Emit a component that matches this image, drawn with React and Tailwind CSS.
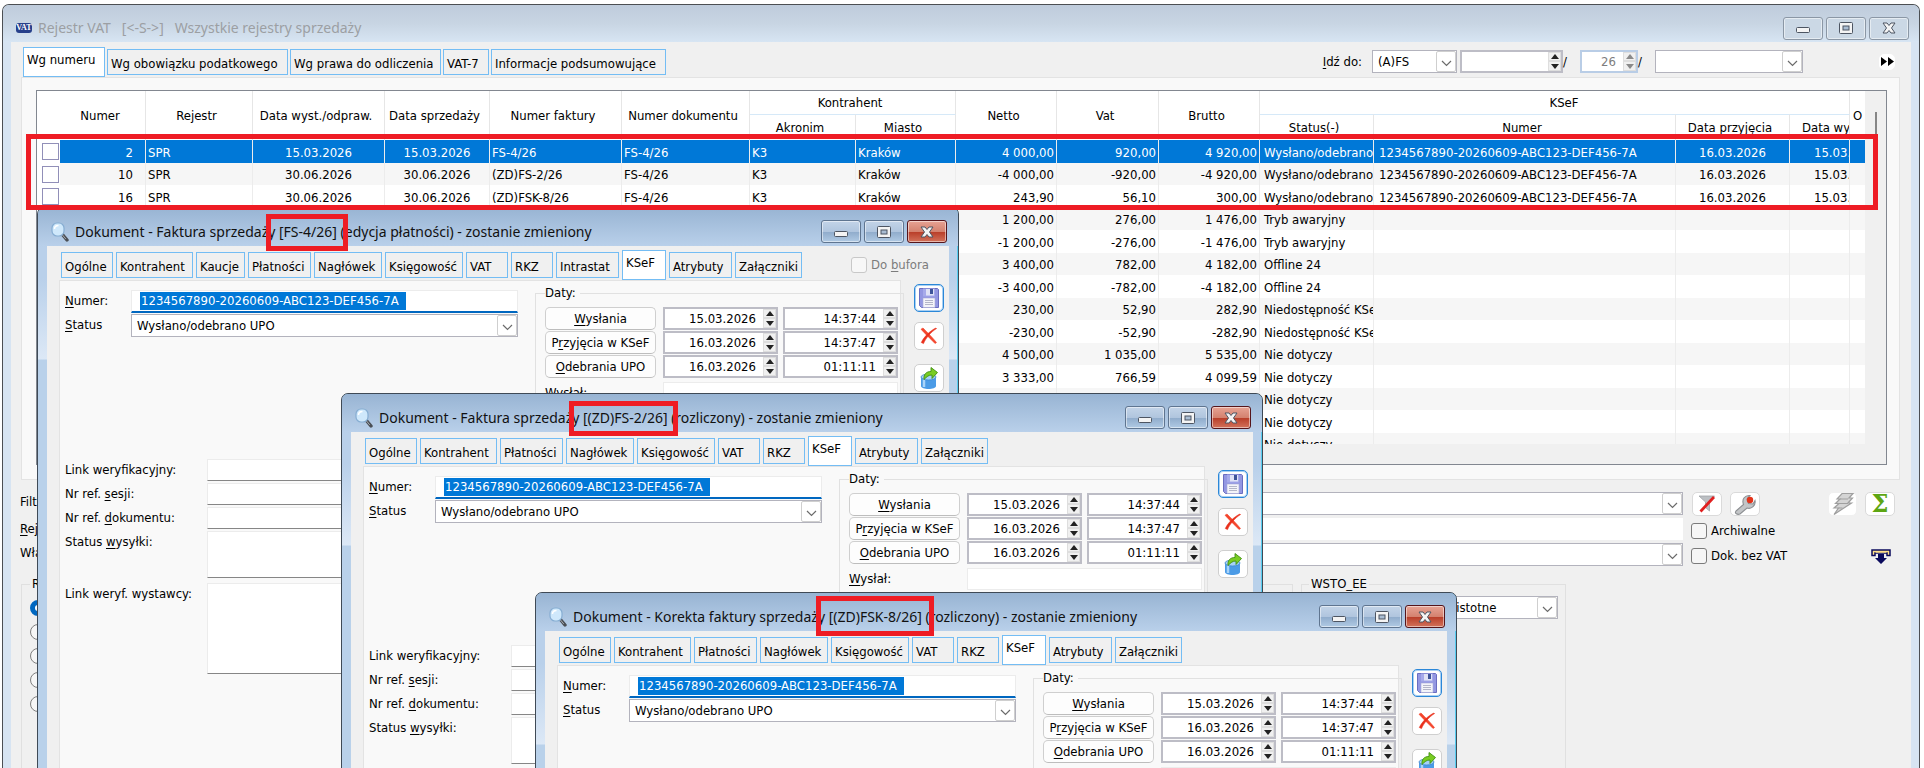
import React, { useId } from "react";
import clsx from "clsx";

const REGISTER_TABS = [
	{ label: "Wg numeru", width: "w-[82px]", active: true },
	{ label: "Wg obowiązku podatkowego", width: "w-[181px]" },
	{ label: "Wg prawa do odliczenia", width: "w-[151px]" },
	{ label: "VAT-7", width: "w-[46px]" },
	{ label: "Informacje podsumowujące", width: "w-[175px]" },
];

const KSEF_NUMBER = "1234567890-20260609-ABC123-DEF456-7A";

const ROWS = [
	["2", "15.03.2026", "FS-4/26", "4 000,00", "920,00", "4 920,00", "Wysłano/odebrano UPO", true],
	["10", "30.06.2026", "(ZD)FS-2/26", "-4 000,00", "-920,00", "-4 920,00", "Wysłano/odebrano UPO", true],
	["16", "30.06.2026", "(ZD)FSK-8/26", "243,90", "56,10", "300,00", "Wysłano/odebrano UPO", true],
	["", "", "", "1 200,00", "276,00", "1 476,00", "Tryb awaryjny"],
	["", "", "", "-1 200,00", "-276,00", "-1 476,00", "Tryb awaryjny"],
	["", "", "", "3 400,00", "782,00", "4 182,00", "Offline 24"],
	["", "", "", "-3 400,00", "-782,00", "-4 182,00", "Offline 24"],
	["", "", "", "230,00", "52,90", "282,90", "Niedostępność KSeF"],
	["", "", "", "-230,00", "-52,90", "-282,90", "Niedostępność KSeF"],
	["", "", "", "4 500,00", "1 035,00", "5 535,00", "Nie dotyczy"],
	["", "", "", "3 333,00", "766,59", "4 099,59", "Nie dotyczy"],
	["", "", "", "", "", "", "Nie dotyczy"],
	["", "", "", "", "", "", "Nie dotyczy"],
	["", "", "", "", "", "", "Nie dotyczy"],
];

const TAB_WIDTHS = {
	Ogólne: "w-[52px]",
	Kontrahent: "w-[77px]",
	Kaucje: "w-[49px]",
	Płatności: "w-[63px]",
	Nagłówek: "w-[68px]",
	Księgowość: "w-[78px]",
	VAT: "w-[42px]",
	RKZ: "w-[42px]",
	Intrastat: "w-[63px]",
	KSeF: "w-[44px]",
	Atrybuty: "w-[63px]",
	Załączniki: "w-[67px]",
};

const SHORT_TABS = ["Ogólne", "Kontrahent", "Płatności", "Nagłówek", "Księgowość", "VAT", "RKZ", "KSeF", "Atrybuty", "Załączniki"];
const LONG_TABS = ["Ogólne", "Kontrahent", "Kaucje", "Płatności", "Nagłówek", "Księgowość", "VAT", "RKZ", "Intrastat", "KSeF", "Atrybuty", "Załączniki"];

/* ---------- icons ---------- */

function MagnifierIcon() {
	return (
		<svg width="18" height="20" viewBox="0 0 18 20" className="shrink-0" aria-hidden>
			<path d="M11 12l5 6" stroke="#4b4f55" strokeWidth="3.4" strokeLinecap="round" />
			<path d="M11.500 13l3 3.600" stroke="#a8adb3" strokeWidth="1" strokeLinecap="round" />
			<rect x="1" y="1" width="12" height="13" rx="5" fill="#cfe8fb" stroke="#86add2" strokeWidth="1.200" />
			<path d="M3.500 7c0-2.500 1.500-3.500 4-3.500" stroke="#fff" strokeWidth="1.500" fill="none" />
		</svg>
	);
}

function SaveIcon() {
	return (
		<svg width="22" height="22" viewBox="0 0 22 22" aria-hidden>
			<path d="M1.500 1.500h18l1 1v18h-17l-2-2z" fill="#9397e2" stroke="#6a6dc0" />
			<rect x="5" y="1.500" width="12" height="8" fill="#a6aaea" />
			<rect x="8" y="2" width="8" height="6.500" fill="#dfe2f6" />
			<rect x="12" y="2" width="3" height="5" fill="#3d5499" />
			<rect x="5" y="11" width="12" height="9.500" fill="#f4f4f9" stroke="#a9acd6" strokeWidth="0.600" />
			<path d="M7 13.500h8M7 15.500h8M7 17.500h8" stroke="#b4b6c8" />
		</svg>
	);
}

function CancelIcon() {
	return (
		<svg width="20" height="20" viewBox="0 0 20 20" aria-hidden>
			<path d="M2 3.200L4 2c4 4 9 9 13.500 14.500L16 17.500C11 12 6 8 2 3.200z" fill="#f4452c" stroke="#f4452c" strokeWidth="0.600" />
			<path d="M17.500 2.600c-5 3-10.500 9-13 15L2.300 16.500C5.500 10 11.500 4.500 17 2z" fill="#e92f1b" stroke="#e92f1b" strokeWidth="0.600" />
		</svg>
	);
}

function DatabaseIcon() {
	return (
		<svg width="20" height="26" viewBox="0 0 20 26" aria-hidden>
			<path d="M2 12v9c0 4 15 4 15 0v-9z" fill="#4b9be6" />
			<path d="M5 14v8" stroke="#a9d4fa" strokeWidth="2.500" />
			<ellipse cx="9.500" cy="12" rx="7.500" ry="3" fill="#a5d2f7" stroke="#3f86cf" strokeWidth="0.800" />
			<path d="M5 14.500c-.5-5 2-8 7-8V2.500l6.500 5-5.500 6V10c-3.500 0-5 1.500-8 4.500z" fill="#79cc22" stroke="#3f8f12" strokeWidth="0.900" />
		</svg>
	);
}

function Chevron() {
	return (
		<svg width="11" height="7" viewBox="0 0 11 7" aria-hidden>
			<path d="M1 1l4.500 4.500L10 1" stroke="#6b6b6b" strokeWidth="1.200" fill="none" />
		</svg>
	);
}

function FilterOffIcon() {
	return (
		<svg width="20" height="20" viewBox="0 0 20 20" aria-hidden>
			<path d="M2 2h15.500L12.500 8v9l-4-3.500V8z" fill="#bcbfc3" stroke="#9ea2a6" strokeWidth="0.800" />
			<path d="M3.500 17.500L17 3" stroke="#e01f1f" strokeWidth="2.800" />
		</svg>
	);
}

function WrenchIcon() {
	return (
		<svg width="24" height="22" viewBox="0 0 24 22" aria-hidden>
			<path d="M3 18l7.500-6.500C8.500 6 12 2 17 2.500L14 6l1.500 4.500L20 11l2-3.500c1 5-3.500 9-8 7.500L7 21c-2.500 1-6-.5-4-3z" fill="#c3c5c7" stroke="#8b8e91" strokeWidth="1.100" />
			<circle cx="17" cy="7" r="3.200" fill="#e3341b" />
		</svg>
	);
}

function LightningIcon() {
	return (
		<svg width="24" height="24" viewBox="0 0 24 24" aria-hidden>
			<path d="M11 1.500h11l-4 4.500h3.500l-4.500 5h3.500L3 22.500 7.500 16H3l5-4.500H4.500L9 7H6z" fill="#d4d4d4" stroke="#9f9f9f" strokeWidth="1.200" />
			<path d="M9 7h8M8 11.500h9M7.500 16h4" stroke="#9f9f9f" strokeWidth="1.200" />
		</svg>
	);
}

function DropDownIcon() {
	return (
		<svg width="20" height="15" viewBox="0 0 20 15" aria-hidden>
			<path d="M1 1h18v5.500h-3V4H4v2.500H1z" fill="#ffe08a" stroke="#0a0a5c" strokeWidth="1.500" />
			<path d="M4.500 3h11" stroke="#ffe08a" strokeWidth="1.500" />
			<path d="M7 5h6v4h3l-6 6-6-6h3z" fill="#0a0a5c" />
		</svg>
	);
}

/* ---------- controls ---------- */

// Label with one underlined access key: "_Numer:" underlines the N
function Mnemonic({ text }) {
	const at = text.indexOf("_");
	if (at < 0) return text;
	return (
		<>
			{text.slice(0, at)}
			<span className="underline underline-offset-2">{text[at + 1]}</span>
			{text.slice(at + 2)}
		</>
	);
}

function WindowButtons({ inactive }) {
	const base = "flex h-[23px] w-10 items-center justify-center rounded-[3px] border shadow-[inset_0_0_0_1px_rgba(255,255,255,0.5)]";
	const plain = inactive
		? "border-[#8b97a5] bg-[#cbd8e5]"
		: "border-[#5f7590] bg-[linear-gradient(#c3d4e8_0%,#b0c5de_50%,#8fabcb_51%,#b0cae4_100%)]";
	const close = inactive
		? "border-[#8b97a5] bg-[#cbd8e5]"
		: "border-[#55151b] bg-[linear-gradient(#e7a394_0%,#d4826f_50%,#b83c27_51%,#d2725b_100%)]";
	return (
		<div className="ml-auto flex gap-[3px]">
			<button type="button" aria-label="Minimalizuj" className={clsx(base, plain)}>
				<svg width="14" height="14" viewBox="0 0 14 14" aria-hidden>
					<rect x="0.500" y="6.500" width="13" height="5" rx="1" fill="#f4f4f4" stroke="#4d5562" />
				</svg>
			</button>
			<button type="button" aria-label="Maksymalizuj" className={clsx(base, plain)}>
				<svg width="14" height="12" viewBox="0 0 14 12" aria-hidden>
					<rect x="0.500" y="0.500" width="13" height="11" rx="1" fill="#f4f4f4" stroke="#4d5562" />
					<rect x="4" y="4" width="6" height="4" fill="#a9bdd3" stroke="#4d5562" />
				</svg>
			</button>
			<button type="button" aria-label="Zamknij" className={clsx(base, close)}>
				<svg width="14" height="12" viewBox="0 0 14 12" aria-hidden>
					<path d="M1 1h4l2 2.500L9 1h4L9.500 6l3.500 5H9L7 8.500 5 11H1l3.500-5z" fill="#f4f4f4" stroke="#4d5562" />
				</svg>
			</button>
		</div>
	);
}

function Combo({ id, label, value, className }) {
	return (
		<div className={clsx("flex h-[23px] border border-[#b3b3bd] bg-white", className)}>
			<select
				id={id}
				aria-label={label}
				defaultValue={value}
				className="min-w-0 flex-1 appearance-none bg-transparent pl-[5px] outline-none"
			>
				<option>{value}</option>
			</select>
			<span className="pointer-events-none flex w-5 items-center justify-center rounded-[2px] border border-[#cfcfcf] bg-white pt-1">
				<Chevron />
			</span>
		</div>
	);
}

function Spinner({ label, value, width, disabled }) {
	const step = "flex items-center justify-center border border-[#dedede]";
	return (
		<div
			className={clsx(
				"flex h-[23px] border-2 bg-white",
				disabled ? "border-[#b9cde6] text-[#7d7d7d]" : "border-[#bdbdc6] text-black",
				width
			)}
		>
			<input
				type="text"
				aria-label={label}
				defaultValue={value}
				disabled={disabled}
				className="min-w-0 flex-1 bg-transparent pt-px pr-[7px] text-right outline-none"
			/>
			<span className="flex w-[13px] flex-col bg-[#f0f0f0]">
				<button type="button" aria-label={`${label} +`} disabled={disabled} className={clsx(step, "h-[9px]")}>
					<svg width="8" height="5" viewBox="0 0 8 5" aria-hidden><path d="M4 0l4 5H0z" fill={disabled ? "#8a8a8a" : "#222"} /></svg>
				</button>
				<button type="button" aria-label={`${label} -`} disabled={disabled} className={clsx(step, "h-[10px]")}>
					<svg width="8" height="5" viewBox="0 0 8 5" aria-hidden><path d="M0 0h8L4 5z" fill={disabled ? "#8a8a8a" : "#222"} /></svg>
				</button>
			</span>
		</div>
	);
}

function ToolButton({ label, children, className }) {
	return (
		<button
			type="button"
			aria-label={label}
			className={clsx("flex items-center justify-center rounded-[5px] border bg-white", className)}
		>
			{children}
		</button>
	);
}

function Tab({ label, width, active }) {
	return (
		<button
			type="button"
			role="tab"
			aria-selected={!!active}
			className={clsx(
				"flex shrink-0 border border-[#74bdf4] pl-[3px] whitespace-nowrap",
				active ? "h-[30px] bg-white pt-1" : "mb-[2px] h-[26px] bg-[#f0f0f0] pt-[6px]",
				width
			)}
		>
			{label}
		</button>
	);
}

function Highlight({ className }) {
	return <div className={clsx("pointer-events-none absolute border-[5px] border-[#ee1c24]", className)} />;
}

/* ---------- document window ---------- */

function DateRow({ label, date, time }) {
	return (
		<div className="flex h-[23px] items-center">
			<button type="button" className="mr-[7px] h-[23px] w-[111px] rounded-[5px] border border-[#cfcfcf] border-b-[#bdbdbd] bg-[#fdfdfd] whitespace-nowrap">
				<Mnemonic text={label} />
			</button>
			<Spinner label={`${label} data`} value={date} width="mr-[5px] w-[115px]" />
			<Spinner label={`${label} godzina`} value={time} width="w-[115px]" />
		</div>
	);
}

function LongField({ label, multiline }) {
	const id = useId();
	const field = "min-w-0 flex-1 resize-none border border-[#ececec] border-b-[#868686] bg-white outline-none";
	return (
		<div className="flex">
			<label htmlFor={id} className="w-[142px] shrink-0 pt-[3px] whitespace-nowrap">
				<Mnemonic text={label} />
			</label>
			{multiline ? <textarea id={id} className={clsx(field, multiline)} /> : <input id={id} type="text" className={clsx(field, "h-[22px]")} />}
		</div>
	);
}

function DocumentWindow({ title, tabs, buffer, position, mark }) {
	const id = useId();
	return (
		<section
			className={clsx(
				"absolute flex h-[800px] w-[922px] flex-col rounded-t-[7px] border border-[#3f4a56] px-[9px] shadow-[inset_-1px_0_0_0_#57cdf0]",
				"bg-[linear-gradient(#98b4d3_0px,#b9d0ea_39px,#b9d0ea_70px,#dce8f6_151px,#b9d1ea_152px)]",
				position
			)}
		>
			<header className="-mx-[9px] flex h-[38px] items-center rounded-t-[6px] bg-[linear-gradient(#98b4d3,#b9d0ea)] pt-[9px] pr-[11px] pl-[13px] font-['Noto_Sans',sans-serif] text-sm text-[#111]">
				<MagnifierIcon />
				<h2 className="ml-[6px] whitespace-nowrap">{title}</h2>
				<WindowButtons />
			</header>
			<Highlight className={mark} />
			<div className="flex flex-1 flex-col bg-[#f0f0f0]">
				<div className="flex h-[34px] items-end gap-[3px] pl-[14px]" role="tablist">
					{tabs.map((tab) => (
						<Tab key={tab} label={tab} width={TAB_WIDTHS[tab]} active={tab === "KSeF"} />
					))}
					{buffer && (
						<label className="mr-5 mb-[7px] ml-auto flex items-center gap-1 text-[#7c7c7c]">
							<input type="checkbox" disabled className="size-4 appearance-none rounded-[3px] border border-[#c8c8c8] bg-[#f7f7f7]" />
							<span><Mnemonic text="Do _bufora" /></span>
						</label>
					)}
				</div>
				<div className="flex flex-1 pl-3">
					<div className="flex min-w-0 flex-1 border border-[#e3e3e3] bg-[#f9f9f9] pl-[5px]">
						<div className="min-w-0 flex-1 pt-[9px]">
							<div className="flex h-[23px]">
								<label htmlFor={`${id}n`} className="w-[66px] pt-[3px]"><Mnemonic text="_Numer:" /></label>
								<div className="flex flex-1 border border-b-2 border-[#ececec] border-b-[#0067c0] bg-white py-px pl-2">
									<input
										id={`${id}n`}
										type="text"
										defaultValue={KSEF_NUMBER}
										className="w-[266px] bg-[#0078d7] pl-px text-white outline-none"
									/>
								</div>
							</div>
							<div className="mt-px flex h-[23px]">
								<label htmlFor={`${id}s`} className="w-[66px] pt-[3px]"><Mnemonic text="_Status" /></label>
								<Combo id={`${id}s`} value="Wysłano/odebrano UPO" className="flex-1" />
							</div>
							<div className="mt-[122px] flex flex-col gap-[2px]">
								<LongField label="Link weryfikacyjny:" />
								<LongField label="Nr ref. _sesji:" />
								<LongField label="Nr ref. _dokumentu:" />
								<LongField label="Status _wysyłki:" multiline="mb-[3px] h-[47px]" />
								<LongField label="Link weryf. wystawcy:" multiline="h-[91px]" />
							</div>
						</div>
						<fieldset className="mt-1 -mr-1 ml-[17px] w-[369px] border border-[#e1e1e1] pt-[6px] pl-[9px]">
							<legend className="h-4 pr-1 leading-4">Daty:</legend>
							<div className="flex flex-col gap-px">
								<DateRow label="_Wysłania" date="15.03.2026" time="14:37:44" />
								<DateRow label="P_rzyjęcia w KSeF" date="16.03.2026" time="14:37:47" />
								<DateRow label="_Odebrania UPO" date="16.03.2026" time="01:11:11" />
							</div>
							<div className="mt-1 flex h-[22px] items-center">
								<label htmlFor={`${id}w`} className="w-[118px]"><Mnemonic text="_Wysłał:" /></label>
								<input id={`${id}w`} type="text" className="h-[22px] w-[235px] border border-[#ececec] bg-white" />
							</div>
						</fieldset>
					</div>
					<div className="mr-[5px] ml-[13px] flex w-[30px] flex-col pt-1">
						<ToolButton label="Zapisz" className="h-7 border-[#2b87d8] shadow-[inset_0_0_0_1px_#a9d0f2]"><SaveIcon /></ToolButton>
						<ToolButton label="Anuluj" className="mt-[10px] h-7 border-[#cfcfcf]"><CancelIcon /></ToolButton>
						<ToolButton label="Eksport" className="mt-[14px] h-7 border-[#cfcfcf]"><DatabaseIcon /></ToolButton>
					</div>
				</div>
			</div>
		</section>
	);
}

/* ---------- register grid ---------- */

function RegisterTable() {
	const th = "border-r border-[#e6e6e6] p-0 pt-px pr-[5px] font-normal whitespace-nowrap overflow-hidden";
	const td = "border-r border-[#ececec] p-0 pt-[2px] whitespace-nowrap overflow-hidden";
	const sub = "border-t border-t-[#d6e9f8]";
	return (
		<table className="w-full table-fixed border-separate border-spacing-0">
			<colgroup>
				<col className="w-[23px]" />
				<col className="w-[86px]" />
				<col className="w-[107px]" />
				<col className="w-[132px]" />
				<col className="w-[105px]" />
				<col className="w-[132px]" />
				<col className="w-[128px]" />
				<col className="w-[106px]" />
				<col className="w-[100px]" />
				<col className="w-[101px]" />
				<col className="w-[102px]" />
				<col className="w-[101px]" />
				<col className="w-[114px]" />
				<col />
				<col className="w-[114px]" />
				<col className="w-[60px]" />
				<col className="w-[15px]" />
			</colgroup>
			<thead>
				<tr className="h-[23px]">
					<th rowSpan={2} className="p-0" aria-label="Zaznacz" />
					<th rowSpan={2} className={th}>Numer</th>
					<th rowSpan={2} className={th}>Rejestr</th>
					<th rowSpan={2} className={th}>Data wyst./odpraw.</th>
					<th rowSpan={2} className={th}>Data sprzedaży</th>
					<th rowSpan={2} className={th}>Numer faktury</th>
					<th rowSpan={2} className={th}>Numer dokumentu</th>
					<th colSpan={2} className={th}>Kontrahent</th>
					<th rowSpan={2} className={th}>Netto</th>
					<th rowSpan={2} className={th}>Vat</th>
					<th rowSpan={2} className={th}>Brutto</th>
					<th colSpan={4} className={clsx(th, "pl-6")}>KSeF</th>
					<th rowSpan={2} className="p-0 font-normal">O</th>
				</tr>
				<tr className="h-[26px]">
					<th className={clsx(th, sub)}>Akronim</th>
					<th className={clsx(th, sub)}>Miasto</th>
					<th className={clsx(th, sub)}>Status(-)</th>
					<th className={clsx(th, sub)}>Numer</th>
					<th className={clsx(th, sub)}>Data przyjęcia</th>
					<th className={clsx(th, sub, "pl-3 text-left")}>Data wysłania</th>
				</tr>
			</thead>
			<tbody>
				{ROWS.map(([no, date, invoice, net, vat, gross, status, sent], index) => (
					<tr
						key={index}
						className={clsx(
							"odd:h-[23px] even:h-[22px]",
							index === 0 ? "text-white" : "text-black",
							index === 0 ? "[&>td+td]:bg-[#0078d7]" : "even:[&>td+td]:bg-[#f6f6f6]"
						)}
					>
						<td className="p-0 pl-[5px]">
							<input
								type="checkbox"
								aria-label={`Zaznacz ${invoice}`}
								className="block size-[17px] appearance-none border border-[#918fb8] bg-white"
							/>
						</td>
						<td className={clsx(td, "pr-3 text-right")}>{no}</td>
						<td className={clsx(td, "pl-[2px]")}>{no && "SPR"}</td>
						<td className={clsx(td, "text-center")}>{date}</td>
						<td className={clsx(td, "text-center")}>{date}</td>
						<td className={clsx(td, "pl-[2px]")}>{invoice}</td>
						<td className={clsx(td, "pl-[2px]")}>{no && "FS-4/26"}</td>
						<td className={clsx(td, "pl-[2px]")}>{no && "K3"}</td>
						<td className={clsx(td, "pl-[2px]")}>{no && "Kraków"}</td>
						<td className={clsx(td, "pr-[2px] text-right")}>{net}</td>
						<td className={clsx(td, "pr-[2px] text-right")}>{vat}</td>
						<td className={clsx(td, "pr-[2px] text-right")}>{gross}</td>
						<td className={clsx(td, "pl-1")}>{status}</td>
						<td className={clsx(td, "pl-[5px]")}>{sent && KSEF_NUMBER}</td>
						<td className={clsx(td, "text-center")}>{sent && "16.03.2026"}</td>
						<td className={clsx(td, "pl-6")}>{sent && "15.03.2026"}</td>
						<td className="p-0" />
					</tr>
				))}
			</tbody>
		</table>
	);
}

export default function App() {
	return (
		<main className="relative flex h-screen flex-col overflow-hidden bg-white pt-1 pr-1 pl-[2px] font-['DejaVu_Sans_Condensed','DejaVu_Sans',sans-serif] text-[13px] leading-4 text-black">
			<section className="flex flex-1 flex-col rounded-t-[7px] border border-b-0 border-[#4c4f53] bg-[#d7e4f2] px-2">
				<header className="-mx-2 flex h-[37px] shrink-0 items-center rounded-t-[6px] bg-[linear-gradient(#bfccdc,#c8d5e3_50%,#d7e5f3)] pt-[9px] pr-[10px] pl-[13px] font-['Noto_Sans',sans-serif] text-sm text-[#9c9fa3]">
					<span className="flex h-[10px] w-4 items-center justify-center rounded-[3px] bg-[#27408b] font-['Liberation_Serif',serif] text-[8px] leading-none font-bold text-white">
						VAT
					</span>
					<h1 className="ml-[6px] whitespace-pre">{"Rejestr VAT   [<-S->]   Wszystkie rejestry sprzedaży"}</h1>
					<WindowButtons inactive />
				</header>

				<div className="flex flex-1 flex-col bg-[#f0f0f0]">
					<div className="flex h-[35px] items-end pl-3">
						<div className="flex items-end gap-[2px]" role="tablist">
							{REGISTER_TABS.map((tab) => (
								<Tab key={tab.label} {...tab} />
							))}
						</div>
						<div className="mr-4 mb-1 ml-auto flex h-[23px] items-center">
							<label htmlFor="goto" className="mr-[10px]"><Mnemonic text="_Idź do:" /></label>
							<Combo id="goto" value="(A)FS" className="mr-[3px] w-[85px]" />
							<Spinner label="Numer dokumentu" value="" width="w-[103px]" />
							<span className="w-[17px]">/</span>
							<Spinner label="Rok" value="26" width="w-[58px]" disabled />
							<span className="w-[17px]">/</span>
							<Combo label="Seria" value="" className="w-[148px]" />
							<ToolButton label="Dalej" className="ml-[76px] size-4 border-white">
								<svg width="13" height="9" viewBox="0 0 13 9" aria-hidden><path d="M0 0l6 4.500L0 9zM7 0l6 4.500L7 9z" fill="#000" /></svg>
							</ToolButton>
						</div>
					</div>

					<div className="mr-[11px] ml-[10px] border border-[#e3e3e3] bg-[#f9f9f9] pt-3 pr-3 pb-[14px] pl-[14px]">
						<div className="flex border border-[#828790] bg-[#f0f0f0]">
							<div className="min-w-0 flex-1 pb-5">
								<div className="h-[353px] overflow-hidden bg-white">
									<RegisterTable />
								</div>
							</div>
							<div className="flex w-[21px] justify-center pt-[21px]">
								<div className="h-24 w-[2px] bg-[#868686]" />
							</div>
						</div>
					</div>

					<div className="mt-3 flex flex-col gap-[3px] pl-[9px]">
						<div className="flex h-[23px]">
							<label htmlFor="filter" className="w-20 pt-[2px]">Filtr:</label>
							<Combo id="filter" value="" className="flex-1" />
							<div className="ml-[9px] flex w-[219px] items-center">
								<ToolButton label="Wyczyść filtr" className="h-6 w-[30px] border-[#dadada]"><FilterOffIcon /></ToolButton>
								<ToolButton label="Konstruuj filtr" className="ml-2 h-6 w-[30px] border-[#dadada]"><WrenchIcon /></ToolButton>
								<ToolButton label="Wykonaj" className="mr-2 ml-auto h-6 w-[29px] border-[#f0f0f0] bg-[#f5f5f5]"><LightningIcon /></ToolButton>
								<ToolButton label="Suma" className="mr-4 h-6 w-[30px] border-[#dadada] font-['DejaVu_Serif',serif] text-2xl leading-none font-black text-[#5da613]">Σ</ToolButton>
							</div>
						</div>
						<div className="flex h-[22px]">
							<label htmlFor="register" className="w-20 pt-[3px]"><Mnemonic text="_Rejestr:" /></label>
							<input id="register" type="text" className="min-w-0 flex-1 bg-white" />
							<label className="ml-2 flex w-[220px] items-center gap-1 pt-1">
								<input type="checkbox" className="size-4 appearance-none rounded-[3px] border border-[#7b7b7b] bg-[#f6f6f6]" />
								Archiwalne
							</label>
						</div>
						<div className="flex h-[23px]">
							<label htmlFor="owner" className="w-20 pt-[2px]">Właściciel:</label>
							<Combo id="owner" value="" className="flex-1" />
							<div className="ml-2 flex w-[220px] items-center pt-[3px]">
								<label className="flex items-center gap-1">
									<input type="checkbox" className="size-4 appearance-none rounded-[3px] border border-[#7b7b7b] bg-[#f6f6f6]" />
									Dok. bez VAT
								</label>
								<button type="button" aria-label="Rozwiń" className="mr-5 ml-auto"><DropDownIcon /></button>
							</div>
						</div>
					</div>

					<div className="mt-[10px] mr-[345px] ml-[10px] flex flex-1 gap-2">
						<fieldset className="flex-1 border border-b-0 border-[#e0e0e0] pl-2">
							<legend className="h-4 px-[2px]">Rodzaj</legend>
							<div className="flex flex-col gap-2 pt-2">
								{[1, 2, 3, 4, 5].map((n) => (
									<input
										key={n}
										type="radio"
										name="kind"
										aria-label={`Rodzaj ${n}`}
										defaultChecked={n === 1}
										className="size-4 appearance-none rounded-full border border-[#808080] bg-[#f6f6f6] checked:border-[5px] checked:border-[#0067c0] checked:bg-white"
									/>
								))}
							</div>
						</fieldset>
						<fieldset className="w-[265px] border border-b-0 border-[#e0e0e0] px-[7px]">
							<legend className="h-4 px-[2px]">WSTO_EE</legend>
							<Combo label="WSTO_EE" value="Nieistotne" className="mt-1 ml-auto w-[127px]" />
						</fieldset>
					</div>
				</div>
			</section>

			<DocumentWindow
				position="top-[207px] left-[37px]"
				title="Dokument - Faktura sprzedaży [FS-4/26] (edycja płatności) - zostanie zmieniony"
				tabs={LONG_TABS}
				buffer
				mark="top-[6px] left-[228px] h-[37px] w-[82px]"
			/>
			<Highlight className="top-[134px] right-[46px] left-[26px] h-[76px]" />
			<DocumentWindow
				position="top-[393px] left-[341px]"
				title="Dokument - Faktura sprzedaży [(ZD)FS-2/26] (rozliczony) - zostanie zmieniony"
				tabs={SHORT_TABS}
				mark="top-[7px] left-[227px] h-[35px] w-[109px]"
			/>
			<DocumentWindow
				position="top-[592px] left-[535px]"
				title="Dokument - Korekta faktury sprzedaży [(ZD)FSK-8/26] (rozliczony) - zostanie zmieniony"
				tabs={SHORT_TABS}
				mark="top-[3px] left-[280px] h-10 w-[118px]"
			/>
		</main>
	);
}
